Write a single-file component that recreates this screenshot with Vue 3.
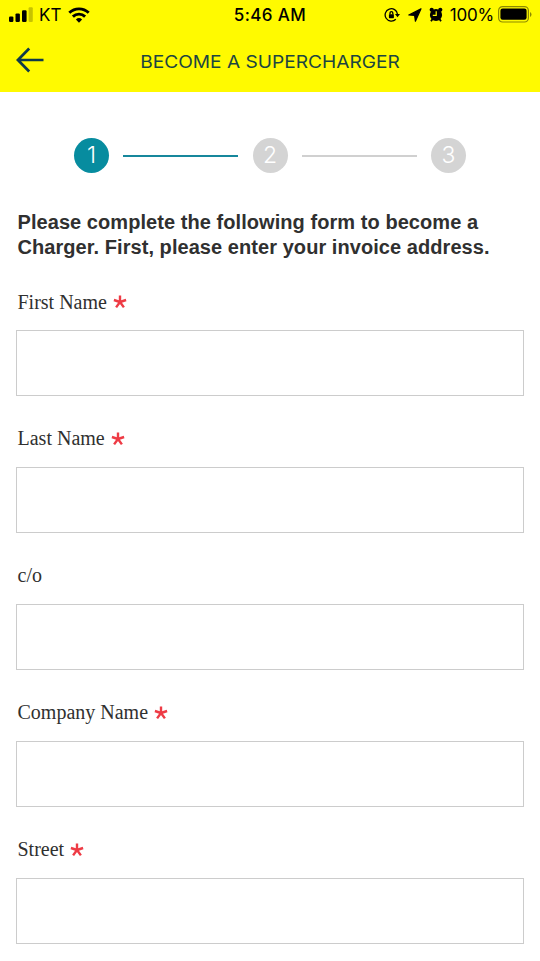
<template>
  <div class="page">
    <header class="app-header">
      <div class="status-bar">
        <div class="status-left">
          <svg class="signal" width="24" height="16" viewBox="0 0 24 16">
            <rect x="0" y="9.4" width="4.4" height="5.6" rx="1.2" />
            <rect x="6.5" y="6.4" width="4.4" height="8.6" rx="1.2" />
            <rect x="13" y="3.2" width="4.6" height="11.8" rx="1.2" />
            <rect x="19.6" y="0.2" width="4.2" height="14.8" rx="1" opacity="0.22" />
          </svg>
          <span class="carrier">KT</span>
          <svg class="wifi" width="22" height="16" viewBox="0 0 22 16">
            <path d="M1.3 5.8A14 14 0 0 1 20.7 5.8" />
            <path d="M4.9 9.6A8.8 8.8 0 0 1 17.1 9.6" />
            <path class="solid" d="M7.9 12.5A4.6 4.6 0 0 1 14.1 12.5L11 15.7Z" />
          </svg>
        </div>
        <span class="clock">5:46 AM</span>
        <div class="status-right">
          <svg class="lock" width="16" height="16" viewBox="0 0 16 16">
            <path class="ring" d="M11.8 12.2A6.2 6.2 0 1 1 13.5 7.2" />
            <path d="M11 7H16L13.5 10.2Z" />
            <rect x="4.9" y="7.2" width="5" height="4" rx="0.6" />
            <path class="shackle" d="M6 7.4V6A1.4 1.4 0 0 1 8.8 6V7.4" />
          </svg>
          <svg class="arrow" width="14" height="14" viewBox="0 0 14 14">
            <path d="M13 0.8L0.8 7L6.6 7.4L7.4 13.2Z" />
          </svg>
          <svg class="alarm" width="14" height="15" viewBox="0 0 14 15">
            <circle cx="7" cy="8" r="6.1" />
            <circle cx="2.7" cy="2.8" r="2.1" />
            <circle cx="11.3" cy="2.8" r="2.1" />
            <path class="leg" d="M3.4 12.2L2 14.3M10.6 12.2L12 14.3" />
            <path class="hands" d="M7.2 4.2V8.3H3.8" />
          </svg>
          <span class="percent">100%</span>
          <svg class="battery" width="34" height="17" viewBox="0 0 34 17">
            <rect class="shell" x="0.6" y="0.6" width="29.8" height="15.4" rx="4" />
            <rect x="2.4" y="2.6" width="26.2" height="11.2" rx="2.2" />
            <path class="cap" d="M32 6V11A2.8 2.8 0 0 0 32 6Z" />
          </svg>
        </div>
      </div>
      <div class="nav-bar">
        <button class="back-btn" aria-label="Back">
          <svg width="28" height="26" viewBox="0 0 28 26">
            <path d="M13.2 1.5L1.9 13L13.2 24.5M1.9 13H27.5" />
          </svg>
        </button>
        <h1 class="title">BECOME A SUPERCHARGER</h1>
      </div>
    </header>

    <main class="content">
      <div class="steps">
        <template v-for="step in steps" :key="step">
          <span v-if="step > 1" class="step-line" :class="{ active: step - 1 === currentStep }"></span>
          <span class="step" :class="{ active: step === currentStep }">{{ step }}</span>
        </template>
      </div>

      <p class="intro">
        <span class="intro-line">Please complete the following form to become a</span>
        <span class="intro-line">Charger. First, please enter your invoice address.</span>
      </p>

      <form class="form" @submit.prevent>
        <div v-for="field in fields" :key="field.id" class="field">
          <label class="field-label" :for="field.id">
            {{ field.label }}
            <svg v-if="field.required" class="required" width="14" height="14" viewBox="0 0 14 14">
              <path d="M7 7V0.6M7 7L0.9 5M7 7L13.1 5M7 7L3.1 12.4M7 7L10.9 12.4" />
            </svg>
          </label>
          <input :id="field.id" v-model="form[field.id]" class="field-input" type="text" />
        </div>
      </form>
    </main>
  </div>
</template>

<script setup>
import { reactive, ref } from 'vue';

const steps = [1, 2, 3];
const currentStep = ref(1);

const fields = [
  { id: 'firstName', label: 'First Name', required: true },
  { id: 'lastName', label: 'Last Name', required: true },
  { id: 'careOf', label: 'c/o', required: false },
  { id: 'company', label: 'Company Name', required: true },
  { id: 'street', label: 'Street', required: true }
];

const form = reactive({
  firstName: '',
  lastName: '',
  careOf: '',
  company: '',
  street: ''
});
</script>

<style>
body {
  margin: 0;
  background-color: #fff;
}
</style>

<style scoped>
.page {
  width: 540px;
  height: 961px;
  overflow: hidden;
  background-color: #fff;
  font-family: "Liberation Sans", Arial, sans-serif;
}

.app-header {
  height: 92px;
  background-color: #fffa00;
}

.status-bar {
  display: grid;
  grid-template-columns: 1fr auto 1fr;
  align-items: center;
  height: 30px;
  padding: 0 9px;
  font-family: Inter, sans-serif;
  font-size: 17px;
  color: #000;
}

.status-left,
.status-right {
  display: flex;
  align-items: center;
}

.status-right {
  justify-content: flex-end;
}

.signal {
  margin-right: 6px;
}

.carrier {
  margin-right: 7px;
  font-size: 17px;
}

.wifi path {
  fill: none;
  stroke: #000;
  stroke-width: 2.9;
}

.wifi .solid {
  fill: #000;
  stroke: none;
}

.clock {
  font-weight: 500;
  letter-spacing: 0.4px;
}

.lock {
  margin-right: 8px;
}

.lock .ring,
.lock .shackle {
  fill: none;
  stroke: #000;
  stroke-width: 1.3;
}

.arrow {
  margin-right: 7px;
}

.arrow path {
  stroke: #000;
  stroke-width: 1.2;
  stroke-linejoin: round;
}

.alarm {
  margin: 0 7px 2px 0;
}

.alarm .leg {
  stroke: #000;
  stroke-width: 1.8;
}

.alarm .hands {
  fill: none;
  stroke: #fffa00;
  stroke-width: 1.2;
}

.percent {
  margin-right: 4px;
  letter-spacing: -0.2px;
}

.battery {
  margin: 0 -1px 1px 0;
}

.battery .shell {
  fill: none;
  stroke: #000;
  stroke-opacity: 0.45;
  stroke-width: 1.2;
}

.battery .cap {
  fill-opacity: 0.45;
}

.nav-bar {
  display: grid;
  grid-template-columns: 60px 1fr 60px;
  align-items: center;
  height: 62px;
}

.back-btn {
  display: flex;
  margin: 0 0 2px 16px;
  padding: 0;
  border: none;
  background: none;
}

.back-btn path {
  fill: none;
  stroke: #0e3a4a;
  stroke-width: 2.7;
}

.title {
  margin: 2px 0 0;
  text-align: center;
  font-family: Inter, sans-serif;
  font-size: 17px;
  font-weight: 400;
  letter-spacing: 0;
  white-space: nowrap;
  color: #1c4540;
  transform: scaleX(1.125);
}

.content {
  padding: 46px 16px 0;
}

.steps {
  display: flex;
  align-items: center;
  justify-content: space-between;
  width: 392px;
  height: 35px;
  margin: 0 auto;
}

.step {
  width: 35px;
  height: 35px;
  border-radius: 50%;
  background-color: #d4d4d4;
  color: #fff;
  font-family: Inter, sans-serif;
  font-size: 23px;
  font-weight: 300;
  line-height: 34px;
  text-align: center;
}

.step.active {
  background-color: #078c9f;
}

.step-line {
  width: 115px;
  height: 1.5px;
  margin-top: 1px;
  background-color: #d0d0d0;
}

.step-line.active {
  background-color: #16879c;
}

.intro {
  margin: 37px 0 0 1.5px;
  font-size: 20px;
  font-weight: 700;
  line-height: 24.5px;
  letter-spacing: 0.06px;
  color: #303030;
}

.intro-line {
  display: block;
  white-space: nowrap;
}

.form {
  margin-top: 31px;
}

.field {
  height: 136.9px;
}

.field-label {
  display: flex;
  align-items: center;
  gap: 6px;
  height: 24px;
  margin-left: 1.5px;
  font-family: "Liberation Serif", "Times New Roman", serif;
  font-size: 20px;
  color: #303030;
}

.required path {
  fill: none;
  stroke: #ee3b45;
  stroke-width: 2.4;
}

.field-input {
  display: block;
  box-sizing: border-box;
  width: 508px;
  height: 66px;
  margin-top: 16.4px;
  padding: 0 16px;
  border: 1px solid #ccc;
  border-radius: 0;
  outline: none;
  background-color: #fff;
  font-size: 20px;
}
</style>
